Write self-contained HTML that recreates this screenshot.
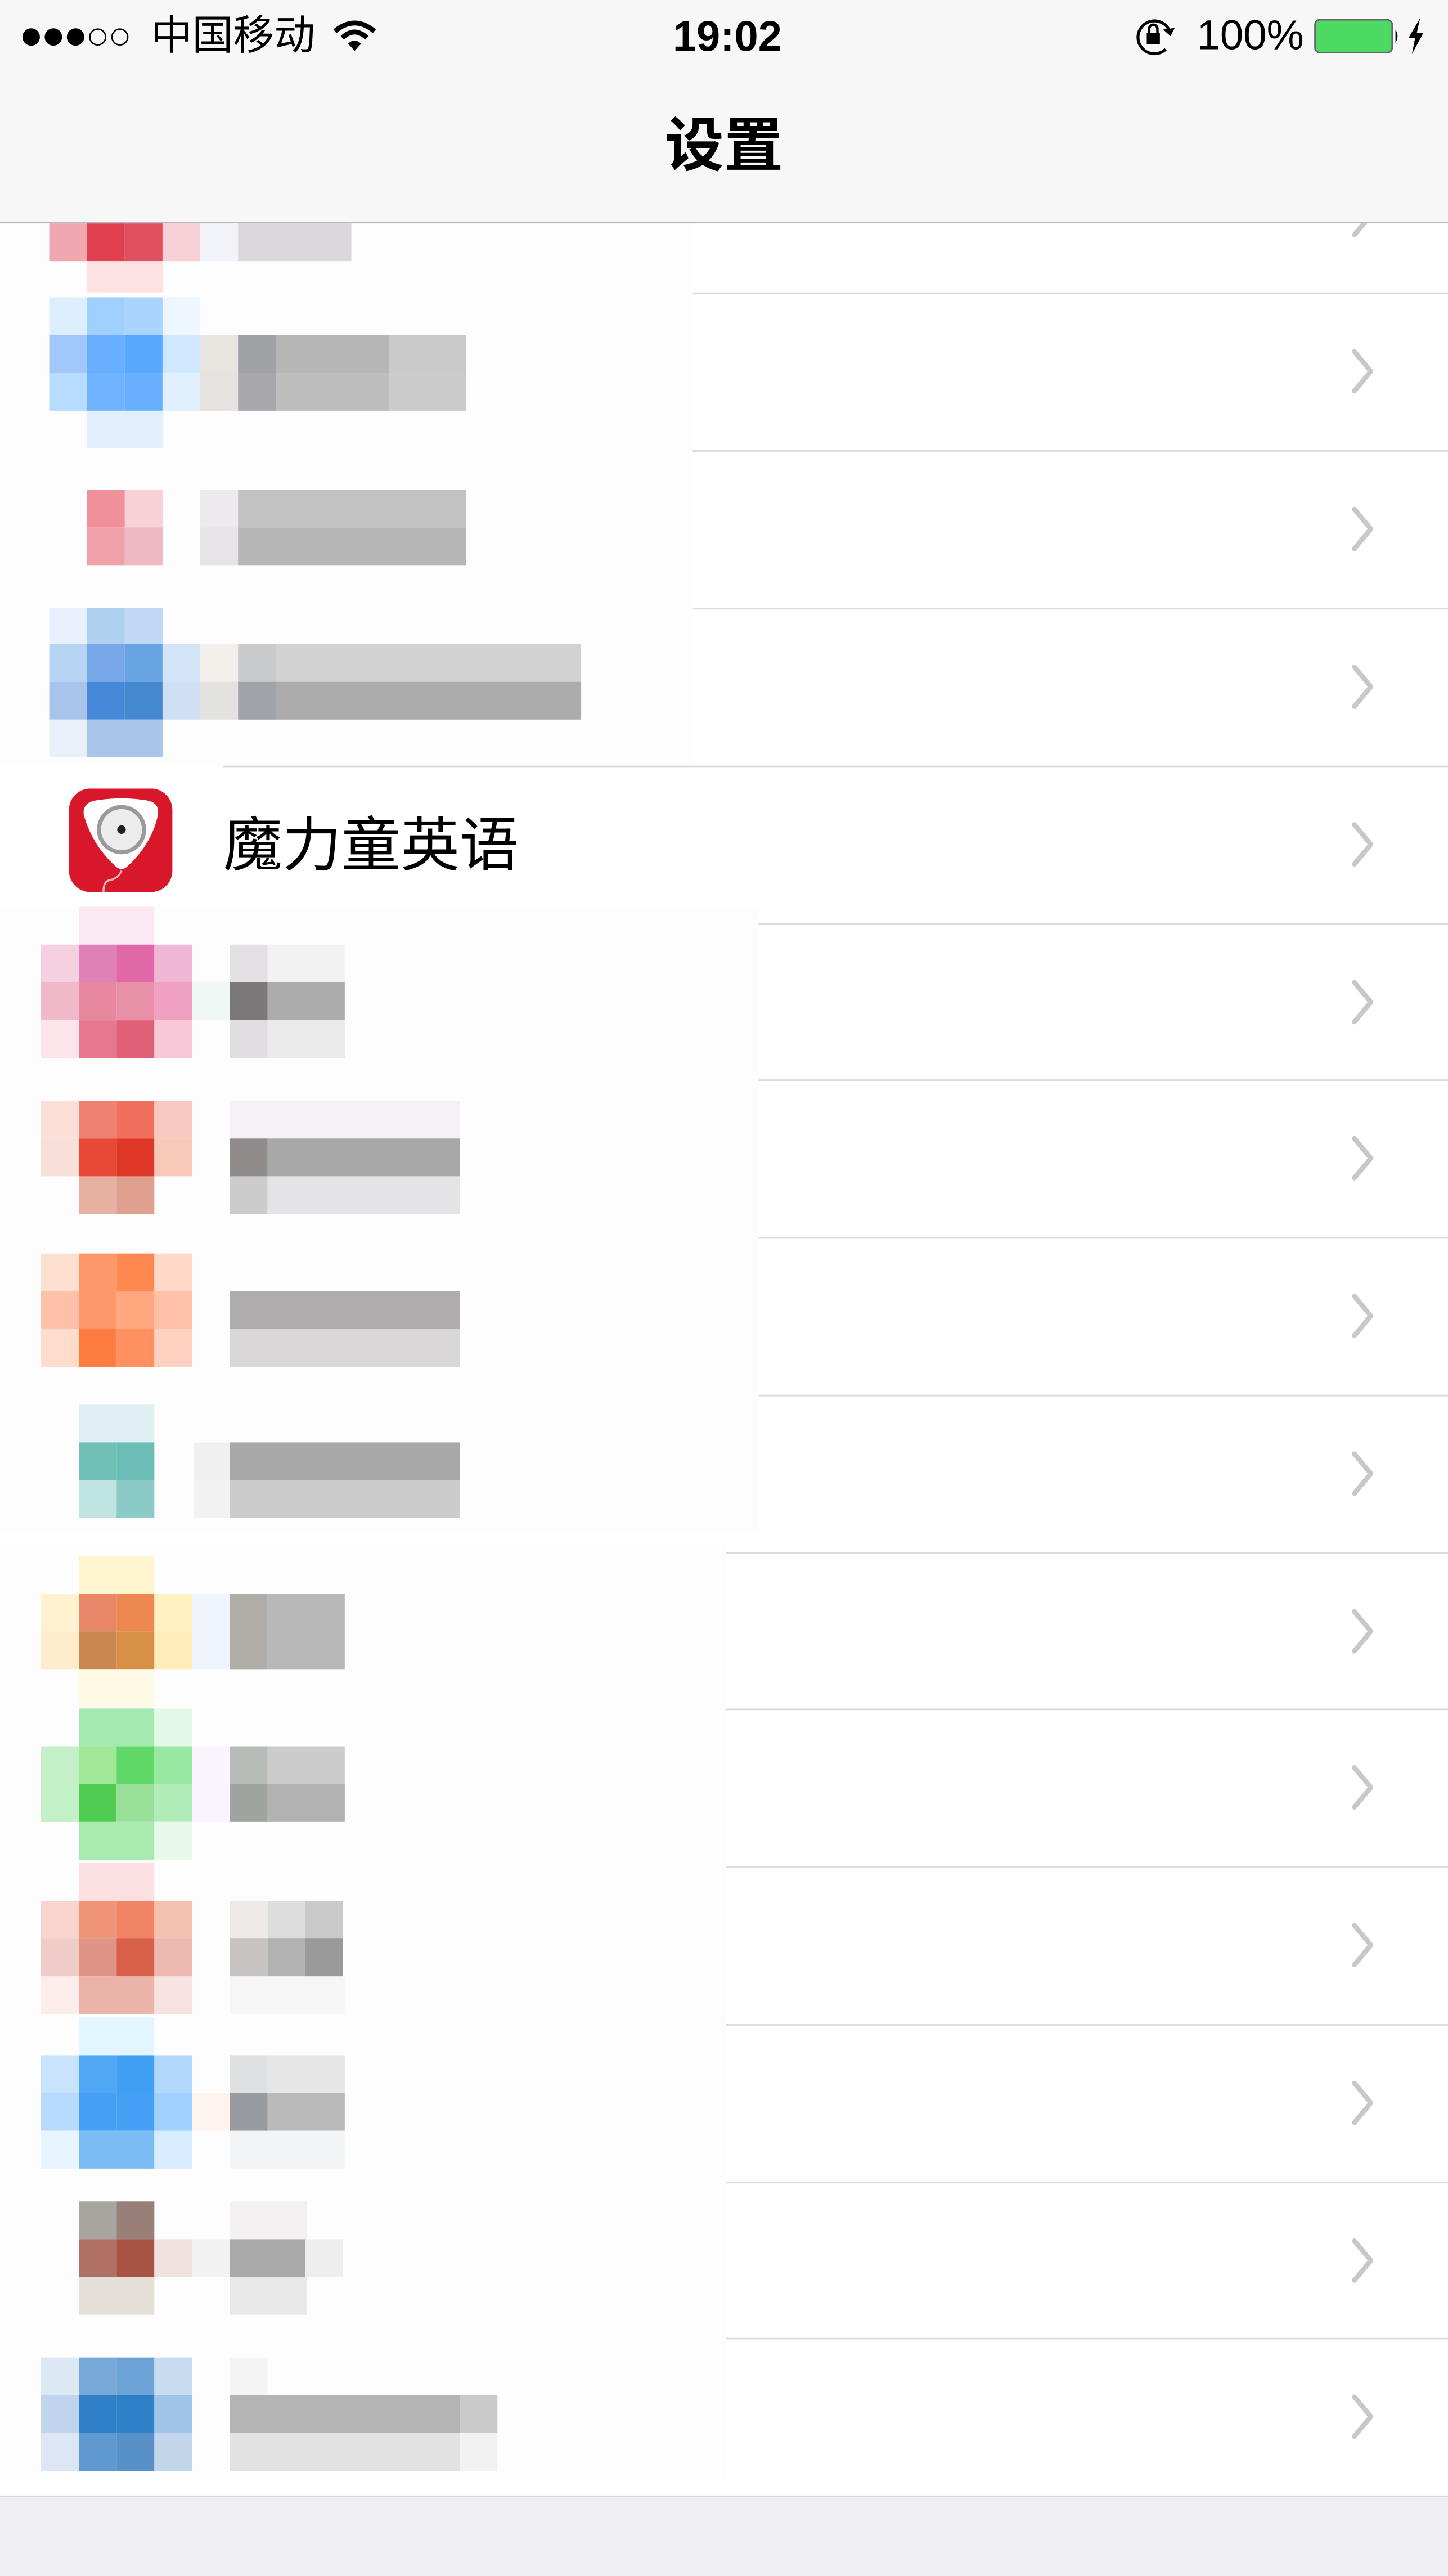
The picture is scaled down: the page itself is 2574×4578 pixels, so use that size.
<!DOCTYPE html>
<html><head><meta charset="utf-8">
<style>
html,body{margin:0;padding:0;background:#fff;}
body{width:2574px;height:4578px;overflow:hidden;position:relative;}
#w{position:absolute;left:0;top:0;width:882px;height:1568px;transform:scale(2.9184,2.9196);transform-origin:0 0;background:#fff;font-family:"Liberation Sans","Noto Sans CJK SC",sans-serif;}
i{position:absolute;display:block;width:23.3px;height:23.3px;}
.sep{position:absolute;left:136px;right:0;height:1.2px;background:#dcdbe0;}
.cov{position:absolute;left:0;background:#fff;}
.chev{position:absolute;left:820px;width:20px;height:30px;}
</style></head><body><div id="w">

<div class="sep" style="top:178px"></div>
<div class="sep" style="top:274px"></div>
<div class="sep" style="top:370px"></div>
<div class="sep" style="top:466px"></div>
<div class="sep" style="top:562px"></div>
<div class="sep" style="top:657px"></div>
<div class="sep" style="top:753px"></div>
<div class="sep" style="top:849px"></div>
<div class="sep" style="top:945px"></div>
<div class="sep" style="top:1040px"></div>
<div class="sep" style="top:1136px"></div>
<div class="sep" style="top:1232px"></div>
<div class="sep" style="top:1328px"></div>
<div class="sep" style="top:1423px"></div>
<div style="position:absolute;left:0;right:0;top:1519px;height:1.2px;background:#d8d8dc"></div>
<div style="position:absolute;left:0;right:0;top:1520px;bottom:0;background:#efeff4"></div>

<div class="cov" style="top:136px;width:422px;height:330px;background:#fdfdfd"></div>
<div class="cov" style="top:552px;width:462px;height:380px;background:#fdfdfd"></div>
<div class="cov" style="top:940px;width:442px;height:570px;background:#fdfdfd"></div>

<i style="left:30px;top:136px;background:#f0a8b0"></i><i style="left:53px;top:136px;background:#e04050"></i><i style="left:76px;top:136px;background:#e05060"></i><i style="left:99px;top:136px;background:#f8d0d8"></i><i style="left:122px;top:136px;background:#f0f4f8"></i>
<i style="left:145px;top:136px;width:69px;background:#dad8da"></i>
<i style="left:53px;top:159px;width:46px;height:19px;background:#fde2e2"></i>
<i style="left:30px;top:181px;background:#dceeff"></i><i style="left:53px;top:181px;background:#a0d0ff"></i><i style="left:76px;top:181px;background:#a8d4ff"></i><i style="left:99px;top:181px;background:#eef6ff"></i>
<i style="left:30px;top:204px;background:#a0c8f8"></i><i style="left:53px;top:204px;background:#68b0ff"></i><i style="left:76px;top:204px;background:#58a8ff"></i><i style="left:99px;top:204px;background:#d0e8ff"></i><i style="left:122px;top:204px;background:#e8e4e0"></i>
<i style="left:145px;top:204px;background:#a0a2a6"></i><i style="left:168px;top:204px;width:69px;background:#b6b6b6"></i><i style="left:237px;top:204px;width:47px;background:#cacaca"></i>
<i style="left:30px;top:227px;background:#b8dcff"></i><i style="left:53px;top:227px;background:#70b4ff"></i><i style="left:76px;top:227px;background:#68b0ff"></i><i style="left:99px;top:227px;background:#e0f0ff"></i><i style="left:122px;top:227px;background:#e6e2e0"></i>
<i style="left:145px;top:227px;background:#a8a8ac"></i><i style="left:168px;top:227px;width:69px;background:#bebebe"></i><i style="left:237px;top:227px;width:47px;background:#cccccc"></i>
<i style="left:53px;top:250px;width:46px;background:#e2efff"></i>
<i style="left:53px;top:298px;background:#f09098"></i><i style="left:76px;top:298px;background:#f8d0d8"></i><i style="left:122px;top:298px;background:#eceaec"></i><i style="left:145px;top:298px;width:139px;background:#c2c2c2"></i>
<i style="left:53px;top:321px;background:#f0a0a8"></i><i style="left:76px;top:321px;background:#f0b8c0"></i><i style="left:122px;top:321px;background:#e6e4e6"></i><i style="left:145px;top:321px;width:139px;background:#b6b6b6"></i>
<i style="left:30px;top:370px;background:#e8f0fc"></i><i style="left:53px;top:370px;background:#b0d0f0"></i><i style="left:76px;top:370px;background:#c0d8f4"></i>
<i style="left:30px;top:392px;background:#b8d4f4"></i><i style="left:53px;top:392px;background:#78a8e8"></i><i style="left:76px;top:392px;background:#68a4e4"></i><i style="left:99px;top:392px;background:#d4e4f8"></i><i style="left:122px;top:392px;background:#f2eeea"></i>
<i style="left:145px;top:392px;background:#c8cacc"></i><i style="left:168px;top:392px;width:186px;background:#d2d2d2"></i>
<i style="left:30px;top:415px;background:#a8c4ec"></i><i style="left:53px;top:415px;background:#4888d8"></i><i style="left:76px;top:415px;background:#4488d0"></i><i style="left:99px;top:415px;background:#d0e0f4"></i><i style="left:122px;top:415px;background:#e4e2e0"></i>
<i style="left:145px;top:415px;background:#a0a4a8"></i><i style="left:168px;top:415px;width:186px;background:#acacac"></i>
<i style="left:30px;top:438px;background:#e8f0fa"></i><i style="left:53px;top:438px;width:46px;background:#a8c4e8"></i>

<svg style="position:absolute;left:42px;top:480px" width="63" height="63" viewBox="0 0 63 63">
<rect x="0" y="0" width="63" height="63" rx="13" fill="#d8182a"/>
<path d="M9 16 Q8 8 18 7 Q32 5 46 7 Q56 8 54 17 Q50 34 36 47 Q32 51 28 47 Q14 34 9 16Z" fill="#fff"/>
<circle cx="32" cy="25" r="15" fill="#9a9a9c"/>
<circle cx="32" cy="25" r="12.5" fill="#ececec"/>
<circle cx="32" cy="25" r="2.6" fill="#222"/>
<path d="M32 50 Q30 55 24 56 Q21 57 21 63" stroke="#f3b0b8" stroke-width="1.2" fill="none"/>
</svg>
<div style="position:absolute;left:136px;top:493px;font-size:36px;line-height:44px;color:#000;">魔力童英语</div>

<i style="left:48px;top:552px;width:46px;background:#fae8f2"></i>
<i style="left:25px;top:575px;background:#f5d0e0"></i><i style="left:48px;top:575px;background:#e080b8"></i><i style="left:71px;top:575px;background:#e068a8"></i><i style="left:94px;top:575px;background:#f0b8d4"></i>
<i style="left:140px;top:575px;background:#e2e0e2"></i><i style="left:163px;top:575px;width:47px;background:#f2f2f2"></i>
<i style="left:25px;top:598px;background:#f0b8c8"></i><i style="left:48px;top:598px;background:#e888a0"></i><i style="left:71px;top:598px;background:#e890a8"></i><i style="left:94px;top:598px;background:#f0a0c0"></i><i style="left:117px;top:598px;background:#eef8f4"></i>
<i style="left:140px;top:598px;background:#7a7878"></i><i style="left:163px;top:598px;width:47px;background:#acacac"></i>
<i style="left:25px;top:621px;background:#fce4ea"></i><i style="left:48px;top:621px;background:#e87890"></i><i style="left:71px;top:621px;background:#e06078"></i><i style="left:94px;top:621px;background:#f8c8d8"></i>
<i style="left:140px;top:621px;background:#e0dee0"></i><i style="left:163px;top:621px;width:47px;background:#eaeaea"></i>
<i style="left:25px;top:670px;background:#fce0d8"></i><i style="left:48px;top:670px;background:#f08070"></i><i style="left:71px;top:670px;background:#f07060"></i><i style="left:94px;top:670px;background:#f8c8c0"></i><i style="left:140px;top:670px;width:140px;background:#f4f2f4"></i>
<i style="left:25px;top:693px;background:#f8e0d8"></i><i style="left:48px;top:693px;background:#e84838"></i><i style="left:71px;top:693px;background:#e03828"></i><i style="left:94px;top:693px;background:#f8c8b8"></i>
<i style="left:140px;top:693px;background:#908c8c"></i><i style="left:163px;top:693px;width:117px;background:#a8a8a8"></i>
<i style="left:48px;top:716px;background:#e8b0a0"></i><i style="left:71px;top:716px;background:#e0a090"></i><i style="left:140px;top:716px;background:#cccccc"></i><i style="left:163px;top:716px;width:117px;background:#e4e4e6"></i>
<i style="left:25px;top:763px;background:#fde0d0"></i><i style="left:48px;top:763px;background:#ff9868"></i><i style="left:71px;top:763px;background:#ff8850"></i><i style="left:94px;top:763px;background:#ffd8c8"></i>
<i style="left:25px;top:786px;background:#ffc0a8"></i><i style="left:48px;top:786px;background:#ff9868"></i><i style="left:71px;top:786px;background:#ffa880"></i><i style="left:94px;top:786px;background:#ffc0a8"></i><i style="left:140px;top:786px;width:140px;background:#aeacac"></i>
<i style="left:25px;top:809px;background:#ffdccc"></i><i style="left:48px;top:809px;background:#ff7c40"></i><i style="left:71px;top:809px;background:#ff9060"></i><i style="left:94px;top:809px;background:#ffd0c0"></i><i style="left:140px;top:809px;width:140px;background:#d8d6d6"></i>
<i style="left:48px;top:855px;width:46px;background:#e0f0f2"></i>
<i style="left:48px;top:878px;background:#70c0b8"></i><i style="left:71px;top:878px;background:#6cbeb8"></i><i style="left:118px;top:878px;background:#f0f0f0"></i><i style="left:140px;top:878px;width:140px;background:#a8a8a8"></i>
<i style="left:48px;top:901px;background:#c0e4e0"></i><i style="left:71px;top:901px;background:#8ccac8"></i><i style="left:118px;top:901px;background:#f2f2f2"></i><i style="left:140px;top:901px;width:140px;background:#cccccc"></i>
<i style="left:48px;top:947px;width:46px;background:#fff4d0"></i>
<i style="left:25px;top:970px;background:#fff2d0"></i><i style="left:48px;top:970px;background:#e88868"></i><i style="left:71px;top:970px;background:#ec8850"></i><i style="left:94px;top:970px;background:#fff0c0"></i><i style="left:117px;top:970px;height:46px;background:#f0f4fc"></i>
<i style="left:140px;top:970px;height:46px;background:#b0aca8"></i><i style="left:163px;top:970px;width:47px;height:46px;background:#b8b8b8"></i>
<i style="left:25px;top:993px;background:#ffeccc"></i><i style="left:48px;top:993px;background:#c88850"></i><i style="left:71px;top:993px;background:#d89048"></i><i style="left:94px;top:993px;background:#ffecb8"></i>
<i style="left:48px;top:1016px;width:46px;background:#fffae6"></i>
<i style="left:48px;top:1040px;width:46px;background:#a4eab0"></i><i style="left:94px;top:1040px;background:#e4f8e8"></i>
<i style="left:25px;top:1063px;background:#c4f0c8"></i><i style="left:48px;top:1063px;background:#a0e898"></i><i style="left:71px;top:1063px;background:#60d868"></i><i style="left:94px;top:1063px;background:#98e8a0"></i><i style="left:117px;top:1063px;height:46px;background:#faf4fe"></i>
<i style="left:140px;top:1063px;background:#b8bcb8"></i><i style="left:163px;top:1063px;width:47px;background:#cccccc"></i>
<i style="left:25px;top:1086px;background:#c4f0c8"></i><i style="left:48px;top:1086px;background:#50cc50"></i><i style="left:71px;top:1086px;background:#98e098"></i><i style="left:94px;top:1086px;background:#b0ecb8"></i>
<i style="left:140px;top:1086px;background:#a0a4a0"></i><i style="left:163px;top:1086px;width:47px;background:#b2b2b2"></i>
<i style="left:48px;top:1109px;width:46px;background:#a8eab0"></i><i style="left:94px;top:1109px;background:#e8f8ea"></i>
<i style="left:48px;top:1134px;width:46px;background:#fde0e2"></i>
<i style="left:25px;top:1157px;background:#f8d4cc"></i><i style="left:48px;top:1157px;background:#f09478"></i><i style="left:71px;top:1157px;background:#f08464"></i><i style="left:94px;top:1157px;background:#f4c0b0"></i>
<i style="left:140px;top:1157px;background:#eeeaea"></i><i style="left:163px;top:1157px;background:#dcdcdc"></i><i style="left:186px;top:1157px;background:#cacaca"></i>
<i style="left:25px;top:1180px;background:#f0ccc8"></i><i style="left:48px;top:1180px;background:#e09488"></i><i style="left:71px;top:1180px;background:#d86048"></i><i style="left:94px;top:1180px;background:#ecb8b0"></i>
<i style="left:140px;top:1180px;background:#c8c4c4"></i><i style="left:163px;top:1180px;background:#b2b2b2"></i><i style="left:186px;top:1180px;background:#9a9a9a"></i>
<i style="left:25px;top:1203px;background:#fcecea"></i><i style="left:48px;top:1203px;width:46px;background:#ecb4a8"></i><i style="left:94px;top:1203px;background:#f8e2e0"></i><i style="left:140px;top:1203px;width:70px;background:#f6f6f6"></i>
<i style="left:48px;top:1228px;width:46px;background:#e2f6ff"></i>
<i style="left:25px;top:1251px;background:#c8e4fc"></i><i style="left:48px;top:1251px;background:#50a8f4"></i><i style="left:71px;top:1251px;background:#40a0f4"></i><i style="left:94px;top:1251px;background:#b0d8fc"></i>
<i style="left:140px;top:1251px;background:#dee0e2"></i><i style="left:163px;top:1251px;width:47px;background:#e6e6e6"></i>
<i style="left:25px;top:1274px;background:#b8daff"></i><i style="left:48px;top:1274px;background:#44a0f4"></i><i style="left:71px;top:1274px;background:#44a0f4"></i><i style="left:94px;top:1274px;background:#a0d0ff"></i><i style="left:117px;top:1274px;background:#fdf4ee"></i>
<i style="left:140px;top:1274px;background:#989ca0"></i><i style="left:163px;top:1274px;width:47px;background:#bababa"></i>
<i style="left:25px;top:1297px;background:#e8f4ff"></i><i style="left:48px;top:1297px;width:46px;background:#7cbcf4"></i><i style="left:94px;top:1297px;background:#d8ecff"></i><i style="left:140px;top:1297px;width:70px;background:#f2f4f6"></i>
<i style="left:48px;top:1340px;background:#a8a4a0"></i><i style="left:71px;top:1340px;background:#988078"></i><i style="left:140px;top:1340px;width:47px;background:#f2f0f0"></i>
<i style="left:48px;top:1363px;background:#b07064"></i><i style="left:71px;top:1363px;background:#a85444"></i><i style="left:94px;top:1363px;background:#f0e0e0"></i><i style="left:117px;top:1363px;background:#f2f2f2"></i>
<i style="left:140px;top:1363px;width:47px;background:#aaaaaa"></i><i style="left:186px;top:1363px;background:#eeeeee"></i>
<i style="left:48px;top:1386px;width:46px;background:#e4e0d8"></i><i style="left:140px;top:1386px;width:47px;background:#e8e8e8"></i>
<i style="left:25px;top:1435px;background:#dce8f4"></i><i style="left:48px;top:1435px;background:#78a8d8"></i><i style="left:71px;top:1435px;background:#6ca4d8"></i><i style="left:94px;top:1435px;background:#c8dcf0"></i><i style="left:140px;top:1435px;background:#f4f4f4"></i>
<i style="left:25px;top:1458px;background:#c0d4ee"></i><i style="left:48px;top:1458px;background:#3080c8"></i><i style="left:71px;top:1458px;background:#3080c8"></i><i style="left:94px;top:1458px;background:#a0c4e8"></i>
<i style="left:140px;top:1458px;width:140px;background:#b4b4b4"></i><i style="left:280px;top:1458px;background:#cacaca"></i>
<i style="left:25px;top:1481px;background:#dce6f4"></i><i style="left:48px;top:1481px;background:#6098d0"></i><i style="left:71px;top:1481px;background:#5890c8"></i><i style="left:94px;top:1481px;background:#c4d6ec"></i>
<i style="left:140px;top:1481px;width:140px;background:#e2e2e2"></i><i style="left:280px;top:1481px;background:#f2f2f2"></i>

<svg class="chev" style="top:116px" viewBox="0 0 20 30"><polyline points="5,3 15,15 5,27" fill="none" stroke="#c7c7cc" stroke-width="3" stroke-linecap="round" stroke-linejoin="round"/></svg>
<svg class="chev" style="top:211px" viewBox="0 0 20 30"><polyline points="5,3 15,15 5,27" fill="none" stroke="#c7c7cc" stroke-width="3" stroke-linecap="round" stroke-linejoin="round"/></svg>
<svg class="chev" style="top:307px" viewBox="0 0 20 30"><polyline points="5,3 15,15 5,27" fill="none" stroke="#c7c7cc" stroke-width="3" stroke-linecap="round" stroke-linejoin="round"/></svg>
<svg class="chev" style="top:403px" viewBox="0 0 20 30"><polyline points="5,3 15,15 5,27" fill="none" stroke="#c7c7cc" stroke-width="3" stroke-linecap="round" stroke-linejoin="round"/></svg>
<svg class="chev" style="top:499px" viewBox="0 0 20 30"><polyline points="5,3 15,15 5,27" fill="none" stroke="#c7c7cc" stroke-width="3" stroke-linecap="round" stroke-linejoin="round"/></svg>
<svg class="chev" style="top:595px" viewBox="0 0 20 30"><polyline points="5,3 15,15 5,27" fill="none" stroke="#c7c7cc" stroke-width="3" stroke-linecap="round" stroke-linejoin="round"/></svg>
<svg class="chev" style="top:690px" viewBox="0 0 20 30"><polyline points="5,3 15,15 5,27" fill="none" stroke="#c7c7cc" stroke-width="3" stroke-linecap="round" stroke-linejoin="round"/></svg>
<svg class="chev" style="top:786px" viewBox="0 0 20 30"><polyline points="5,3 15,15 5,27" fill="none" stroke="#c7c7cc" stroke-width="3" stroke-linecap="round" stroke-linejoin="round"/></svg>
<svg class="chev" style="top:882px" viewBox="0 0 20 30"><polyline points="5,3 15,15 5,27" fill="none" stroke="#c7c7cc" stroke-width="3" stroke-linecap="round" stroke-linejoin="round"/></svg>
<svg class="chev" style="top:978px" viewBox="0 0 20 30"><polyline points="5,3 15,15 5,27" fill="none" stroke="#c7c7cc" stroke-width="3" stroke-linecap="round" stroke-linejoin="round"/></svg>
<svg class="chev" style="top:1073px" viewBox="0 0 20 30"><polyline points="5,3 15,15 5,27" fill="none" stroke="#c7c7cc" stroke-width="3" stroke-linecap="round" stroke-linejoin="round"/></svg>
<svg class="chev" style="top:1169px" viewBox="0 0 20 30"><polyline points="5,3 15,15 5,27" fill="none" stroke="#c7c7cc" stroke-width="3" stroke-linecap="round" stroke-linejoin="round"/></svg>
<svg class="chev" style="top:1265px" viewBox="0 0 20 30"><polyline points="5,3 15,15 5,27" fill="none" stroke="#c7c7cc" stroke-width="3" stroke-linecap="round" stroke-linejoin="round"/></svg>
<svg class="chev" style="top:1361px" viewBox="0 0 20 30"><polyline points="5,3 15,15 5,27" fill="none" stroke="#c7c7cc" stroke-width="3" stroke-linecap="round" stroke-linejoin="round"/></svg>
<svg class="chev" style="top:1456px" viewBox="0 0 20 30"><polyline points="5,3 15,15 5,27" fill="none" stroke="#c7c7cc" stroke-width="3" stroke-linecap="round" stroke-linejoin="round"/></svg>

<div style="position:absolute;left:0;top:0;width:882px;height:136px;background:#f7f7f7;border-bottom:1.3px solid #b8b8bc;box-sizing:border-box"></div>
<svg style="position:absolute;left:13px;top:16px" width="72" height="13" viewBox="0 0 72 13">
<circle cx="6" cy="6.5" r="5.3" fill="#000"/><circle cx="19.5" cy="6.5" r="5.3" fill="#000"/><circle cx="33" cy="6.5" r="5.3" fill="#000"/>
<circle cx="46.5" cy="6.5" r="4.8" fill="none" stroke="#000" stroke-width="0.9"/><circle cx="60" cy="6.5" r="4.8" fill="none" stroke="#000" stroke-width="0.9"/>
</svg>
<div style="position:absolute;left:92px;top:6px;font-size:25px;line-height:32px;color:#000">中国移动</div>
<svg style="position:absolute;left:203px;top:12px" width="26" height="20" viewBox="0 0 26 20">
<path d="M1 7 Q13 -3 25 7" fill="none" stroke="#000" stroke-width="3"/>
<path d="M5.5 11 Q13 4 20.5 11" fill="none" stroke="#000" stroke-width="3"/>
<path d="M9 14.5 L13 19 L17 14.5 Q13 11 9 14.5Z" fill="#000"/>
</svg>
<div style="position:absolute;left:0;width:886px;text-align:center;top:6px;font-size:26px;line-height:32px;font-weight:bold;color:#000">19:02</div>
<svg style="position:absolute;left:690px;top:9px" width="28" height="26" viewBox="0 0 28 26">
<path d="M20 21 A10 10 0 1 1 22 9" fill="none" stroke="#000" stroke-width="1.8"/>
<path d="M18.5 9 L23 13 L25.5 8Z" fill="#000"/>
<rect x="8.5" y="11" width="8" height="7" fill="#000"/>
<path d="M10 11 V8.5 A2.5 2.5 0 0 1 15 8.5 V11" fill="none" stroke="#000" stroke-width="1.5"/>
</svg>
<div style="position:absolute;left:729px;top:6px;font-size:25.5px;line-height:32px;color:#000">100%</div>
<svg style="position:absolute;left:799px;top:10px" width="76" height="24" viewBox="0 0 76 24">
<rect x="2" y="2" width="47" height="20" rx="3" fill="#4cd964" stroke="#666" stroke-width="1"/>
<path d="M51 8 Q53.5 12 51 16Z" fill="#000"/>
<path d="M66 1 L59 13 L63 13 L61 23 L68 10 L64 10Z" fill="#000"/>
</svg>
<div style="position:absolute;left:0;width:882px;text-align:center;top:66px;font-size:36px;line-height:46px;font-weight:bold;color:#000">设置</div>

</div></body></html>
